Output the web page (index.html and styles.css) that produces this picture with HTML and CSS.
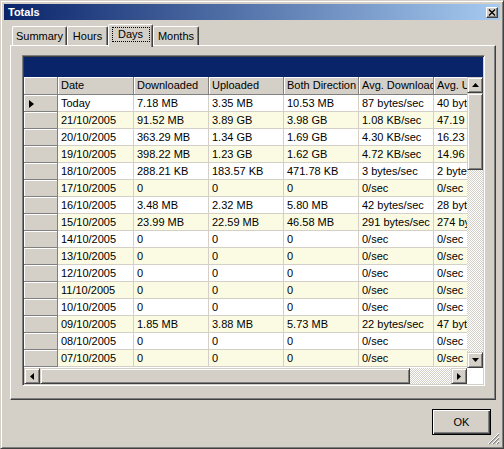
FILE: index.html
```html
<!DOCTYPE html>
<html lang="en">
<head>
  <meta charset="UTF-8" />
  <title>Totals</title>
  <link rel="stylesheet" href="styles.css">
</head>
<body>
  <div class="window">
    <div class="titlebar">
      <span class="title">Totals</span>
      <span class="close">
        <svg width="8" height="7" viewBox="0 0 8 7"><path d="M1 0.5l6 6M7 0.5l-6 6" stroke="#000" stroke-width="1.4" fill="none"/></svg>
      </span>
    </div>

    <div class="content">
      <div class="tabs">
        <div class="tab tab-summary">Summary</div>
        <div class="tab tab-hours">Hours</div>
        <div class="tab tab-days active"><span class="focus">Days</span></div>
        <div class="tab tab-months">Months</div>
      </div>

      <div class="panel">
        <div class="datagrid">
          <div class="caption"></div>
          <div class="rows">
            <table>
              <colgroup>
                <col class="c-ind"><col class="c-date"><col class="c-val"><col class="c-val"><col class="c-val"><col class="c-val"><col class="c-val">
              </colgroup>
              <tr>
                <th></th><th>Date</th><th>Downloaded</th><th>Uploaded</th><th>Both Direction</th><th>Avg. Download</th><th>Avg. Upload</th>
              </tr>
              <tr><td class="ind"><span class="cur"></span></td><td>Today</td><td>7.18 MB</td><td>3.35 MB</td><td>10.53 MB</td><td>87 bytes/sec</td><td>40 bytes/sec</td></tr>
              <tr class="alt"><td class="ind"></td><td>21/10/2005</td><td>91.52 MB</td><td>3.89 GB</td><td>3.98 GB</td><td>1.08 KB/sec</td><td>47.19 KB/sec</td></tr>
              <tr><td class="ind"></td><td>20/10/2005</td><td>363.29 MB</td><td>1.34 GB</td><td>1.69 GB</td><td>4.30 KB/sec</td><td>16.23 KB/sec</td></tr>
              <tr class="alt"><td class="ind"></td><td>19/10/2005</td><td>398.22 MB</td><td>1.23 GB</td><td>1.62 GB</td><td>4.72 KB/sec</td><td>14.96 KB/sec</td></tr>
              <tr><td class="ind"></td><td>18/10/2005</td><td>288.21 KB</td><td>183.57 KB</td><td>471.78 KB</td><td>3 bytes/sec</td><td>2 bytes/sec</td></tr>
              <tr class="alt"><td class="ind"></td><td>17/10/2005</td><td>0</td><td>0</td><td>0</td><td>0/sec</td><td>0/sec</td></tr>
              <tr><td class="ind"></td><td>16/10/2005</td><td>3.48 MB</td><td>2.32 MB</td><td>5.80 MB</td><td>42 bytes/sec</td><td>28 bytes/sec</td></tr>
              <tr class="alt"><td class="ind"></td><td>15/10/2005</td><td>23.99 MB</td><td>22.59 MB</td><td>46.58 MB</td><td>291 bytes/sec</td><td>274 bytes/sec</td></tr>
              <tr><td class="ind"></td><td>14/10/2005</td><td>0</td><td>0</td><td>0</td><td>0/sec</td><td>0/sec</td></tr>
              <tr class="alt"><td class="ind"></td><td>13/10/2005</td><td>0</td><td>0</td><td>0</td><td>0/sec</td><td>0/sec</td></tr>
              <tr><td class="ind"></td><td>12/10/2005</td><td>0</td><td>0</td><td>0</td><td>0/sec</td><td>0/sec</td></tr>
              <tr class="alt"><td class="ind"></td><td>11/10/2005</td><td>0</td><td>0</td><td>0</td><td>0/sec</td><td>0/sec</td></tr>
              <tr><td class="ind"></td><td>10/10/2005</td><td>0</td><td>0</td><td>0</td><td>0/sec</td><td>0/sec</td></tr>
              <tr class="alt"><td class="ind"></td><td>09/10/2005</td><td>1.85 MB</td><td>3.88 MB</td><td>5.73 MB</td><td>22 bytes/sec</td><td>47 bytes/sec</td></tr>
              <tr><td class="ind"></td><td>08/10/2005</td><td>0</td><td>0</td><td>0</td><td>0/sec</td><td>0/sec</td></tr>
              <tr class="alt"><td class="ind"></td><td>07/10/2005</td><td>0</td><td>0</td><td>0</td><td>0/sec</td><td>0/sec</td></tr>
            </table>
          </div>

          <div class="vscroll">
            <div class="sbtn"><svg width="7" height="4" viewBox="0 0 7 4"><path d="M3.5 0L7 4H0z" fill="#000"/></svg></div>
            <div class="thumb thumb-v"></div>
            <div class="track"></div>
            <div class="sbtn"><svg width="7" height="4" viewBox="0 0 7 4"><path d="M0 0h7L3.5 4z" fill="#000"/></svg></div>
          </div>

          <div class="hscroll">
            <div class="sbtn"><svg width="4" height="7" viewBox="0 0 4 7"><path d="M0 3.5L4 0v7z" fill="#000"/></svg></div>
            <div class="thumb thumb-h"></div>
            <div class="track"></div>
            <div class="sbtn"><svg width="4" height="7" viewBox="0 0 4 7"><path d="M0 0l4 3.5L0 7z" fill="#000"/></svg></div>
          </div>
          <div class="corner"></div>
        </div>
      </div>
    </div>

    <div class="footer">
      <button class="ok">OK</button>
      <div class="grip">
        <svg width="12" height="12" viewBox="0 0 12 12">
          <path d="M11 1L1 11M11 5L5 11M11 9L9 11" stroke="#808080" stroke-width="1.2"/>
          <path d="M11 0L0 11M11 4L4 11M11 8L8 11" stroke="#fff" stroke-width="1"/>
        </svg>
      </div>
    </div>
  </div>
</body>
</html>
```

FILE: styles.css
```css
* {
  box-sizing: border-box;
}

body {
  margin: 0;
  background: #d4d0c8;
  font-family: "Liberation Sans", Arial, sans-serif;
  font-size: 11px;
  color: #000;
}

.window {
  width: 504px;
  height: 449px;
  padding: 3px;
  background: #d4d0c8;
  border: 1px solid;
  border-color: #d4d0c8 #404040 #404040 #d4d0c8;
  box-shadow: inset 1px 1px #fff, inset -1px -1px #808080;
  display: flex;
  flex-direction: column;
}

/* title bar */
.titlebar {
  height: 16px;
  padding: 0 2px 0 4px;
  background: linear-gradient(to right, #0a246a, #a6caf0);
  color: #fff;
  font-weight: bold;
  display: flex;
  align-items: center;
  justify-content: space-between;
}

.close {
  width: 12px;
  height: 11px;
  background: #d4d0c8;
  border: 1px solid;
  border-color: #fff #404040 #404040 #fff;
  box-shadow: inset -1px -1px #808080;
  display: flex;
  align-items: center;
  justify-content: center;
}

.close svg {
  display: block;
}

/* tabs */
.content {
  padding: 4px 4px 0 6px;
}

.tabs {
  height: 21px;
  padding-left: 2px;
  display: flex;
  align-items: flex-end;
}

.tab {
  height: 19px;
  border: 1px solid;
  border-bottom: none;
  border-color: #fff #404040 transparent #fff;
  border-radius: 2px 2px 0 0;
  box-shadow: inset -1px 0 #808080;
  display: flex;
  align-items: center;
  justify-content: center;
  padding-bottom: 1px;
}

.tab-summary { width: 55px; }
.tab-hours { width: 41px; }
.tab-days { width: 45px; }
.tab-months { width: 46px; }

.tab.active {
  height: 23px;
  margin-bottom: -2px;
  position: relative;
  z-index: 1;
  background: #d4d0c8;
  align-items: flex-start;
  padding: 2px 0 0;
}

.focus {
  width: 38px;
  height: 15px;
  border: 1px dotted #000;
  display: flex;
  align-items: center;
  justify-content: center;
  padding-bottom: 1px;
}

/* tab page */
.panel {
  height: 355px;
  width: 486px;
  padding: 9px 0 0 11px;
  border: 1px solid;
  border-color: #fff #404040 #404040 #fff;
  box-shadow: inset -1px -1px #808080;
}

.datagrid {
  width: 463px;
  height: 331px;
  padding: 1px;
  background: #fff;
  border: 1px solid;
  border-color: #808080 #fff #fff #808080;
  box-shadow: inset 1px 1px #404040, inset -1px -1px #d4d0c8;
  display: grid;
  grid-template-columns: 443px 16px;
  grid-template-rows: 20px 291px 16px;
}

.caption {
  grid-column: 1 / 3;
  background: #0a246a;
}

.rows {
  overflow: hidden;
  background: #fff;
}

table {
  width: 485px;
  table-layout: fixed;
  border-spacing: 0;
}

.c-ind { width: 34px; }
.c-date { width: 76px; }
.c-val { width: 75px; }

th {
  padding: 0 3px;
  line-height: 17px;
  font-weight: normal;
  text-align: left;
  white-space: nowrap;
  overflow: hidden;
  background: #d4d0c8;
  border-right: 1px solid #808080;
  border-bottom: 1px solid #808080;
  box-shadow: inset 1px 1px #fff;
}

td {
  padding: 0 3px;
  line-height: 16px;
  white-space: nowrap;
  overflow: hidden;
  border-right: 1px solid #d4d0c8;
  border-bottom: 1px solid #d4d0c8;
}

tr.alt td {
  background: #fbfbe3;
}

td.ind,
tr.alt td.ind {
  background: #d4d0c8;
  border-right-color: #808080;
  border-bottom-color: #808080;
  box-shadow: inset 1px 1px #fff;
}

.cur {
  display: inline-block;
  margin-left: 2px;
  vertical-align: -1px;
  border-left: 5px solid #000;
  border-top: 4.5px solid transparent;
  border-bottom: 4.5px solid transparent;
}

/* scrollbars */
.vscroll {
  display: flex;
  flex-direction: column;
}

.hscroll {
  display: flex;
}

.sbtn,
.thumb {
  width: 16px;
  height: 16px;
  flex: none;
  background: #d4d0c8;
  border: 1px solid;
  border-color: #d4d0c8 #404040 #404040 #d4d0c8;
  box-shadow: inset 1px 1px #fff, inset -1px -1px #808080;
  display: flex;
  align-items: center;
  justify-content: center;
}

.sbtn svg {
  display: block;
}

.thumb-v {
  height: 77px;
}

.thumb-h {
  width: 370px;
}

.track {
  flex: 1;
  background: repeating-conic-gradient(#d4d0c8 0 25%, #fff 0 50%) 0 0 / 2px 2px;
}

.corner {
  background: #fff;
}

/* bottom */
.footer {
  flex: 1;
  padding: 9px 9px 0 0;
  display: flex;
  justify-content: flex-end;
  align-items: flex-start;
  position: relative;
}

.ok {
  width: 59px;
  height: 26px;
  padding: 0;
  background: #d4d0c8;
  border: 1px solid #000;
  box-shadow: inset 1px 1px #fff, inset -1px -1px #404040, inset -2px -2px #808080;
  font-family: "Liberation Sans", Arial, sans-serif;
  font-size: 11px;
  color: #000;
}

.grip {
  position: absolute;
  right: 0;
  bottom: 0;
  width: 12px;
  height: 12px;
}

.grip svg {
  display: block;
}
```
